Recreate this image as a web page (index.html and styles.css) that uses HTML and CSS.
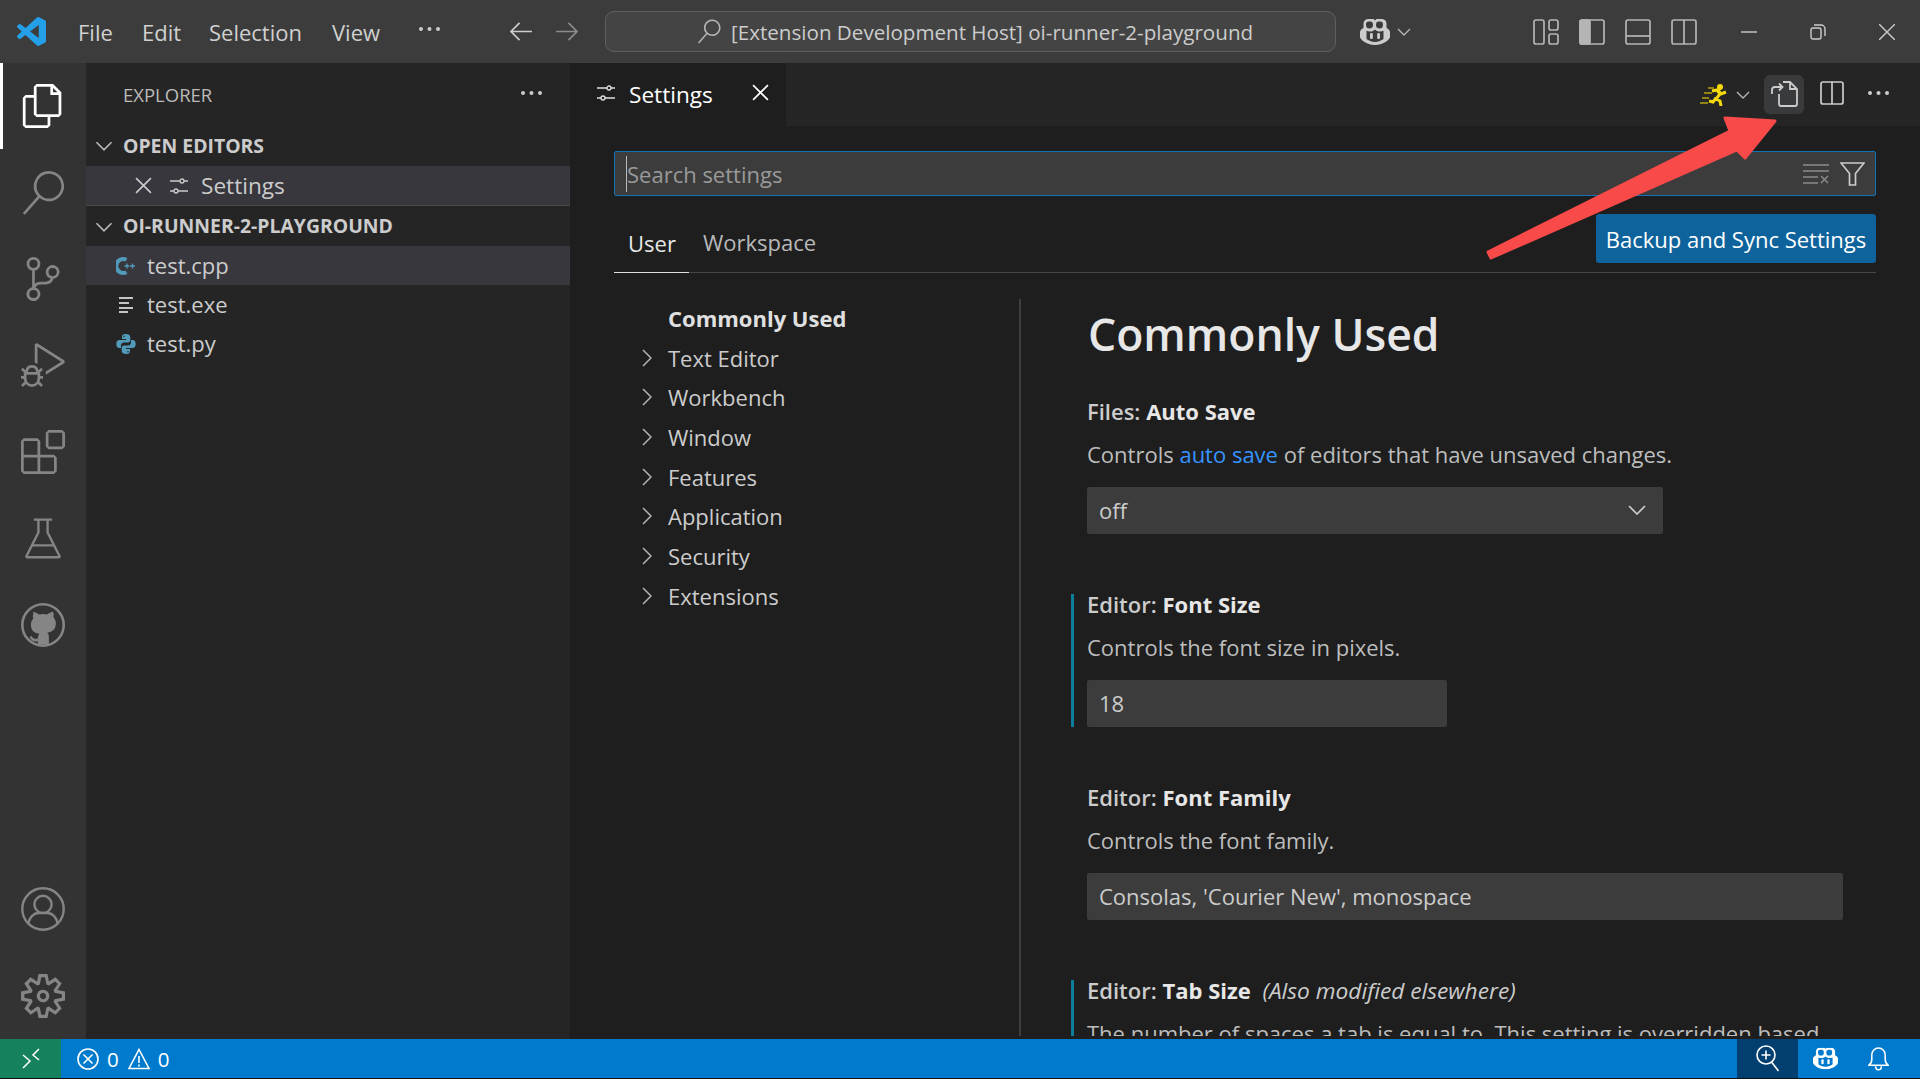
FILE: index.html
```html
<!DOCTYPE html>
<html>
<head>
  <meta charset="UTF-8">
  <title>Settings - oi-runner-2-playground</title>
  <link rel="stylesheet" href="styles.css">
</head>
<body>
<div class="app">
  <header class="titlebar">
    <svg class="logo" viewBox="0 0 24 24"><path fill="#23a0e8" d="M23.15 2.587L18.21.21a1.494 1.494 0 0 0-1.705.29l-9.46 8.63-4.12-3.128a.999.999 0 0 0-1.276.057L.327 7.261A1 1 0 0 0 .326 8.74L3.899 12 .326 15.26a1 1 0 0 0 .001 1.479L1.65 17.94a.999.999 0 0 0 1.276.057l4.12-3.128 9.46 8.63a1.492 1.492 0 0 0 1.704.29l4.942-2.377A1.5 1.5 0 0 0 24 20.06V3.939a1.5 1.5 0 0 0-.85-1.352zm-5.146 14.861L10.826 12l7.178-5.448v10.896z"/></svg>
    <nav class="menu">
      <span>File</span><span>Edit</span><span>Selection</span><span>View</span>
      <svg class="dots" viewBox="0 0 23 6"><circle cx="3" cy="3" r="2"/><circle cx="11.500" cy="3" r="2"/><circle cx="20" cy="3" r="2"/></svg>
    </nav>
    <div class="nav-arrows">
      <svg class="arrow" viewBox="0 0 24 20"><path d="M11 1L2 10l9 9M2 10h22"/></svg>
      <svg class="arrow dim" viewBox="0 0 24 20"><path d="M13 1l9 9-9 9M22 10H0"/></svg>
    </div>
    <div class="command-center">
      <svg class="cc-search" viewBox="0 0 24 24"><path d="M15.25 0a8.25 8.25 0 0 0-6.18 13.72L1 22.88l1.12 1 8.05-9.12A8.251 8.251 0 1 0 15.25.01V0zm0 15a6.75 6.75 0 1 1 0-13.5 6.75 6.75 0 0 1 0 13.5z"/></svg>
      <span>[Extension Development Host] oi-runner-2-playground</span>
    </div>
    <div class="copilot-menu">
      <svg class="copilot" viewBox="0 0 30 26"><use href="#copilot-shape"/></svg>
      <svg class="chevron" viewBox="0 0 14 8"><path d="M1 1l6 6 6-6"/></svg>
    </div>
    <div class="layout-icons">
      <svg class="layout" viewBox="0 0 26 26"><rect x="1" y="1" width="10" height="24" rx="2"/><rect x="16" y="1" width="9" height="10" rx="2"/><rect x="16" y="15" width="9" height="10" rx="2"/></svg>
      <svg class="layout" viewBox="0 0 26 26"><rect x="1" y="1" width="24" height="24" rx="2"/><rect class="solid" x="1" y="1" width="10" height="24" rx="2"/></svg>
      <svg class="layout" viewBox="0 0 26 26"><rect x="1" y="1" width="24" height="24" rx="2"/><path d="M1 17h24"/></svg>
      <svg class="layout" viewBox="0 0 26 26"><rect x="1" y="1" width="24" height="24" rx="2"/><path d="M13 1v24"/></svg>
    </div>
    <div class="window-controls">
      <svg class="win" viewBox="0 0 16 16"><path d="M0 8h16"/></svg>
      <svg class="win" viewBox="0 0 16 16"><rect x="1" y="4" width="10" height="11" rx="2"/><path d="M4 1h7a4 4 0 0 1 4 4v7"/></svg>
      <svg class="win" viewBox="0 0 16 16"><path d="M0 0l16 16M16 0L0 16"/></svg>
    </div>
  </header>

  <div class="workbench">
    <aside class="activitybar">
      <div class="activity active"><svg viewBox="0 0 24 24"><path d="M17.5 0h-9L7 1.500V6H2.500L1 7.500v15.070L2.500 24h12.070L16 22.570V18h4.700l1.300-1.430V4.500L17.500 0zm0 2.120l2.380 2.380H17.500V2.120zm-3 20.380h-12v-15H7v9.070L8.500 18h6v4.500zm6-6h-12v-15H16V6h4.500v10.500z"/></svg></div>
      <div class="activity"><svg viewBox="0 0 24 24"><path d="M15.250 0a8.250 8.250 0 0 0-6.180 13.720L1 22.880l1.120 1 8.050-9.120A8.251 8.251 0 1 0 15.250.01V0zm0 15a6.750 6.750 0 1 1 0-13.500 6.750 6.750 0 0 1 0 13.500z"/></svg></div>
      <div class="activity"><svg viewBox="0 0 24 24"><path d="M21.007 8.222A3.738 3.738 0 0 0 15.045 5.200a3.737 3.737 0 0 0 1.156 6.583 2.988 2.988 0 0 1-2.668 1.670h-2.990a4.456 4.456 0 0 0-2.989 1.165V7.400a3.737 3.737 0 1 0-1.494 0v9.117a3.776 3.776 0 1 0 1.816.099 2.990 2.990 0 0 1 2.668-1.667h2.990a4.484 4.484 0 0 0 4.223-3.039 3.736 3.736 0 0 0 3.250-3.687zM4.565 3.738a2.242 2.242 0 1 1 4.484 0 2.242 2.242 0 0 1-4.484 0zm4.484 16.441a2.242 2.242 0 1 1-4.484 0 2.242 2.242 0 0 1 4.484 0zm8.221-9.715a2.242 2.242 0 1 1 0-4.485 2.242 2.242 0 0 1 0 4.485z"/></svg></div>
      <div class="activity"><svg viewBox="0 0 24 24"><path d="M10.940 13.500l-1.320 1.320a3.730 3.730 0 0 0-7.240 0L1.060 13.500 0 14.560l1.720 1.720-.22.220V18H0v1.500h1.500v.08c.077.489.214.966.41 1.420L0 22.940 1.060 24l1.650-1.650A4.308 4.308 0 0 0 6 24a4.310 4.310 0 0 0 3.290-1.650L10.940 24 12 22.940 10.090 21c.198-.464.336-.951.41-1.450v-.1H12V18h-1.500v-1.500l-.22-.22L12 14.560l-1.060-1.060zM6 13.500a2.250 2.250 0 0 1 2.250 2.250h-4.500A2.250 2.250 0 0 1 6 13.500zm3 6a3.330 3.330 0 0 1-3 3 3.330 3.330 0 0 1-3-3v-2.250h6v2.250zm14.760-9.900v1.260L13.500 17.370v-1.760l8.500-5.370L9 2v9.460a5.070 5.070 0 0 0-1.500-.72V.63L8.640 0l15.120 9.600z"/></svg></div>
      <div class="activity"><svg viewBox="0 0 24 24"><path d="M13.500 1.500L15 0h7.500L24 1.500V9l-1.500 1.500H15L13.500 9V1.500zm1.500 0V9h7.500V1.500H15zM0 15V6l1.500-1.500H9L10.500 6v7.500H18l1.500 1.500v7.500L18 24H1.500L0 22.500V15zm9-1.500V6H1.500v7.500H9zM9 15H1.500v7.500H9V15zm1.500 7.500H18V15h-7.500v7.500z"/></svg></div>
      <div class="activity"><svg class="line" viewBox="0 0 24 24"><path d="M7 2h10M9.500 2v7L3 21.800c-.2.4 0 .7.500.7h17c.5 0 .7-.3.500-.7L14.500 9V2M6 16h12" stroke-width="1.300"/></svg></div>
      <div class="activity"><svg viewBox="0 0 24 24"><path fill-rule="evenodd" d="M12 0a12 12 0 1 0 0 24 12 12 0 0 0 0-24zm0 1.400a10.600 10.600 0 1 1 0 21.200 10.600 10.600 0 0 1 0-21.200z"/><path d="M6.500 4.800c1 .1 2.300.8 3.300 1.500a9 9 0 0 1 4.400 0c1-.7 2.300-1.400 3.300-1.500.4 1 .4 2.200.2 3 .9 1 1.300 2.100 1.300 3.400 0 3.100-1.900 4.600-4.700 5 .7.500.9 1.200.9 2.100v4.400h-6v-1.800c-2 .4-3.600-.3-4.600-2.400l1.100-.5c.8 1.500 2.100 1.800 3.500 1.300 0-.8.300-2 .9-2.500-2.800-.4-4.700-1.900-4.700-5 0-1.300.4-2.400 1.300-3.400-.3-.8-.3-2 .1-3z"/></svg></div>
      <div class="activity-spacer"></div>
      <div class="activity"><svg class="line" viewBox="0 0 24 24"><circle cx="12" cy="12" r="11.300"/><circle cx="12" cy="9.500" r="4.700"/><path d="M4 20c.6-3.500 3-5.800 5.500-5.800h5c2.500 0 4.900 2.300 5.500 5.800"/></svg></div>
      <div class="activity"><svg viewBox="0 0 24 24"><path d="M19.850 8.750l4.150.83v4.840l-4.150.83 2.350 3.520-3.430 3.430-3.520-2.350-.83 4.150H9.580l-.83-4.150-3.520 2.350-3.430-3.430 2.350-3.520L0 14.420V9.580l4.150-.83L1.800 5.230 5.230 1.800l3.520 2.350L9.580 0h4.840l.83 4.150 3.520-2.350 3.430 3.430-2.350 3.520zm-1.570 5.070l4-.81v-2l-4-.81-.54-1.300 2.290-3.430-1.430-1.430-3.430 2.290-1.300-.54-.81-4h-2l-.81 4-1.300.54-3.430-2.290-1.430 1.430L6.380 8.900l-.54 1.300-4 .81v2l4 .81.54 1.300-2.290 3.430 1.430 1.430 3.430-2.290 1.300.54.81 4h2l.81-4 1.300-.54 3.430 2.290 1.430-1.430-2.290-3.430.54-1.300zm-8.186-4.672A3.430 3.430 0 0 1 12 8.570 3.440 3.440 0 0 1 15.430 12a3.430 3.430 0 1 1-5.336-2.852zm.956 4.274c.281.188.612.288.95.288A1.700 1.700 0 0 0 13.710 12a1.710 1.710 0 1 0-2.660 1.422z"/></svg></div>
    </aside>

    <aside class="sidebar">
      <div class="sidebar-title">
        <span>EXPLORER</span>
        <svg class="dots" viewBox="0 0 23 6"><circle cx="3" cy="3" r="2"/><circle cx="11.500" cy="3" r="2"/><circle cx="20" cy="3" r="2"/></svg>
      </div>
      <div class="section-head">
        <svg class="chevron" viewBox="0 0 14 8"><path d="M1 1l6 6 6-6"/></svg>
        <span>OPEN EDITORS</span>
      </div>
      <div class="row open-editor">
        <svg class="x-icon" viewBox="0 0 16 16"><path d="M1 1l14 14M15 1L1 15"/></svg>
        <svg class="sliders" viewBox="0 0 18 18"><use href="#sliders-shape"/></svg>
        <span>Settings</span>
      </div>
      <div class="section-head project">
        <svg class="chevron" viewBox="0 0 14 8"><path d="M1 1l6 6 6-6"/></svg>
        <span>OI-RUNNER-2-PLAYGROUND</span>
      </div>
      <div class="row file selected">
        <svg class="file-icon" viewBox="0 0 20 20"><path d="M10.500 3.800a7 7 0 1 0 0 12.400" stroke="#519aba" stroke-width="4"/><path d="M11 7.500v5M8.500 10h5M16.500 7.500v5M14 10h5" stroke="#519aba" stroke-width="1.300"/></svg>
        <span>test.cpp</span>
      </div>
      <div class="row file">
        <svg class="file-icon" viewBox="0 0 20 20"><path d="M3 3h14M3 8h10M3 13h14M3 17h9" stroke="#c5c5c5" stroke-width="2"/></svg>
        <span>test.exe</span>
      </div>
      <div class="row file">
        <svg class="file-icon" viewBox="0 0 20 20"><path fill="#519aba" d="M9.800 0C6.500 0 6 1.400 6 3v2h4v1H3.500C1.500 6 .3 7.500.3 10s1.200 4 3 4H5v-2.500C5 9.500 6.500 8.500 8 8.500h4c1.300 0 2.300-1 2.300-2.300V3c0-1.800-1.800-3-4.500-3zM8 1.500a.8.800 0 1 1 0 1.600.8.800 0 0 1 0-1.600z"/><path fill="#519aba" d="M10.200 20c3.300 0 3.800-1.400 3.800-3v-2h-4v-1h6.500c2 0 3.200-1.500 3.200-4s-1.200-4-3-4H15v2.500c0 2-1.500 3-3 3H8c-1.300 0-2.300 1-2.300 2.300V17c0 1.800 1.800 3 4.500 3zm1.800-1.500a.8.800 0 1 1 0-1.600.8.800 0 0 1 0 1.600z"/></svg>
        <span>test.py</span>
      </div>
    </aside>

    <main class="editor">
      <div class="tabbar">
        <div class="tab">
          <svg class="sliders" viewBox="0 0 18 18"><use href="#sliders-shape"/></svg>
          <span>Settings</span>
          <svg class="x-icon" viewBox="0 0 16 16"><path d="M1 1l14 14M15 1L1 15"/></svg>
        </div>
        <div class="tab-actions">
          <svg class="runner" viewBox="0 0 28 22">
            <path class="trail" d="M8 4h6M4 9h8M2 14h7M0 19h8"/>
            <circle cx="20" cy="3" r="3" fill="#f5d90a"/>
            <path class="legs" d="M12 7l5-1 3 4-4 5 4 2 1 5M18 6l3 4 5-2M16 14l-3 4-4-1"/>
          </svg>
          <svg class="chevron" viewBox="0 0 14 8"><path d="M1 1l6 6 6-6"/></svg>
          <div class="action-btn hover">
            <svg class="action-icon" viewBox="0 0 28 26"><path d="M9 13v10a2 2 0 0 0 2 2h14a2 2 0 0 0 2-2V8l-7-7h-7M20 1v7h7M2 13V9a3 3 0 0 1 3-3h7M9 2.500L12.500 6 9 9.500"/></svg>
          </div>
          <svg class="split" viewBox="0 0 24 24"><rect x="1" y="1" width="22" height="22" rx="2"/><path d="M12 1v22"/></svg>
          <svg class="dots" viewBox="0 0 23 6"><circle cx="3" cy="3" r="2"/><circle cx="11.500" cy="3" r="2"/><circle cx="20" cy="3" r="2"/></svg>
        </div>
      </div>

      <div class="settings">
        <div class="search-box">
          <span class="caret"></span>
          <span class="placeholder">Search settings</span>
          <svg class="clear-icon" viewBox="0 0 26 20"><path d="M0 1h26M0 7h26M0 13h15M0 19h15M18 12l7 7M25 12l-7 7"/></svg>
          <svg class="filter-icon" viewBox="0 0 25 24"><path d="M1 1h23l-8.500 10.500V23h-6V11.500z"/></svg>
        </div>
        <div class="scope-row">
          <span class="scope active">User</span>
          <span class="scope">Workspace</span>
          <button class="sync-btn">Backup and Sync Settings</button>
        </div>

        <div class="settings-body">
          <ul class="toc">
            <li class="toc-top">Commonly Used</li>
            <li><svg class="toc-arrow" viewBox="0 0 10 18"><path d="M1 1l8 8-8 8"/></svg>Text Editor</li>
            <li><svg class="toc-arrow" viewBox="0 0 10 18"><path d="M1 1l8 8-8 8"/></svg>Workbench</li>
            <li><svg class="toc-arrow" viewBox="0 0 10 18"><path d="M1 1l8 8-8 8"/></svg>Window</li>
            <li><svg class="toc-arrow" viewBox="0 0 10 18"><path d="M1 1l8 8-8 8"/></svg>Features</li>
            <li><svg class="toc-arrow" viewBox="0 0 10 18"><path d="M1 1l8 8-8 8"/></svg>Application</li>
            <li><svg class="toc-arrow" viewBox="0 0 10 18"><path d="M1 1l8 8-8 8"/></svg>Security</li>
            <li><svg class="toc-arrow" viewBox="0 0 10 18"><path d="M1 1l8 8-8 8"/></svg>Extensions</li>
          </ul>
          <div class="contents">
            <h1>Commonly Used</h1>
            <section class="setting">
              <div class="setting-title">Files: <b>Auto Save</b></div>
              <div class="setting-desc">Controls <a href="#">auto save</a> of editors that have unsaved changes.</div>
              <div class="field select">off
                <svg class="select-arrow" viewBox="0 0 18 10"><path d="M1 1l8 8 8-8"/></svg>
              </div>
            </section>
            <section class="setting modified">
              <div class="setting-title">Editor: <b>Font Size</b></div>
              <div class="setting-desc">Controls the font size in pixels.</div>
              <div class="field short">18</div>
            </section>
            <section class="setting">
              <div class="setting-title">Editor: <b>Font Family</b></div>
              <div class="setting-desc">Controls the font family.</div>
              <div class="field wide">Consolas, 'Courier New', monospace</div>
            </section>
            <section class="setting modified">
              <div class="setting-title">Editor: <b>Tab Size</b> <i>(Also modified elsewhere)</i></div>
              <div class="setting-desc">The number of spaces a tab is equal to. This setting is overridden based</div>
            </section>
          </div>
        </div>
      </div>
    </main>
  </div>

  <footer class="statusbar">
    <div class="remote"><svg viewBox="0 0 18 22"><path d="M1 7l7 6-7 7M17 1l-6 6 6 5"/></svg></div>
    <div class="problems">
      <svg class="status-icon" viewBox="0 0 22 22"><circle cx="11" cy="11" r="10"/><path d="M6.500 6.500l9 9M15.500 6.500l-9 9"/></svg>
      <span>0</span>
      <svg class="status-icon warn" viewBox="0 0 22 22"><path d="M11 1.500L21 20.500H1zM11 8v7M11 16.500v2"/></svg>
      <span>0</span>
    </div>
    <div class="status-right">
      <div class="zoom-item"><svg class="status-icon" viewBox="0 0 23 27"><circle cx="10" cy="10" r="9"/><path d="M10 5.500v9M5.500 10h9M15.500 17l7 9"/></svg></div>
      <svg class="copilot small" viewBox="0 0 30 26"><use href="#copilot-shape"/></svg>
      <svg class="status-icon bell" viewBox="0 0 22 26"><path d="M1 20c2-1.500 3-3 3-6V9a7 7 0 0 1 14 0v5c0 3 1 4.500 3 6zM8 21c0 5 6 5 6 0"/></svg>
    </div>
  </footer>

  <svg class="callout" viewBox="0 0 1920 1079"><path d="M1725 118L1775 121L1745 158L1737 150L1491 258L1488 252L1730 131z"/></svg>
</div>

<svg class="defs" width="0" height="0">
  <symbol id="sliders-shape" viewBox="0 0 18 18">
    <path d="M0 4h10M14 4h4M0 14h4M8 14h10" fill="none" stroke="currentColor" stroke-width="1.300"/>
    <circle cx="12" cy="4" r="2" fill="none" stroke="currentColor" stroke-width="1.300"/>
    <circle cx="6" cy="14" r="2" fill="none" stroke="currentColor" stroke-width="1.300"/>
  </symbol>
  <symbol id="copilot-shape" viewBox="0 0 30 26">
    <path fill="currentColor" fill-rule="evenodd" d="M8 0h4.500c1.300 0 2 .6 2.500 1.500C15.500.6 16.200 0 17.500 0H22c3 0 4.500 2.200 4.500 5v4c2 1 3.500 2.500 3.500 4v5c0 2-6 8-15 8S0 20 0 18v-5c0-1.500 1.500-3 3.500-4V5C3.500 2.200 5 0 8 0zm.500 2.500c-1.500 0-2.500.8-2.500 3 0 2.800.8 4 3.500 4 2.500 0 3.500-1.300 3.500-3.500 0-2.500-1-3.500-2.500-3.500zm10 0c-1.500 0-2.500 1-2.500 3.500 0 2.200 1 3.500 3.500 3.500 2.700 0 3.500-1.200 3.500-4 0-2.200-1-3-2.500-3zM15 10.500c-1.500 1.500-3 2-5 2-1.300 0-2.500-.3-3.500-.8V20c2 1.500 5 3 8.500 3s6.500-1.500 8.500-3v-8.300c-1 .5-2.200.8-3.500.8-2 0-3.500-.5-5-2z"/>
    <rect x="10" y="14" width="2.800" height="6" rx="1.200" fill="currentColor"/>
    <rect x="17.200" y="14" width="2.800" height="6" rx="1.200" fill="currentColor"/>
  </symbol>
</svg>
</body>
</html>
```
FILE: styles.css
```css
* {
  box-sizing: border-box;
}
html, body {
  margin: 0;
  height: 100%;
  overflow: hidden;
  background: #111;
}
body {
  font-family: "Open Sans", "Noto Sans", sans-serif;
  font-size: 22px;
  color: #ccc;
}
svg {
  display: block;
  flex: none;
}
.defs {
  position: absolute;
}
.app {
  position: relative;
  display: flex;
  flex-direction: column;
  height: 1078px;
}

/* title bar */
.titlebar {
  display: flex;
  align-items: center;
  flex: none;
  height: 63px;
  background: #3c3c3c;
}
.logo {
  width: 29px;
  height: 29px;
  margin-left: 17px;
}
.menu {
  display: grid;
  grid-template-columns: 64px 67px 123px 86px 23px;
  align-items: center;
  margin-left: 32px;
  color: #d0d0d0;
}
.dots {
  width: 23px;
  height: 6px;
  fill: #ccc;
}
.menu .dots {
  margin-top: -6px;
}
.nav-arrows {
  display: flex;
  gap: 24px;
  margin-left: 68px;
}
.arrow {
  width: 23px;
  height: 19px;
  fill: none;
  stroke: #ccc;
  stroke-width: 1.800;
}
.arrow.dim {
  stroke: #8c8c8c;
}
.command-center {
  display: flex;
  align-items: center;
  gap: 10px;
  width: 731px;
  height: 41px;
  margin-left: 26px;
  padding-left: 91px;
  background: #444;
  border: 1px solid #5f5f5f;
  border-radius: 9px;
  font-size: 20.600px;
}
.cc-search {
  width: 24px;
  height: 25px;
  fill: #b5b5b5;
}
.copilot-menu {
  display: flex;
  align-items: center;
  gap: 7px;
  margin-left: 24px;
}
.copilot {
  width: 30px;
  height: 26px;
  color: #ccc;
}
.chevron {
  width: 14px;
  height: 8px;
  fill: none;
  stroke: #b5b5b5;
  stroke-width: 1.400;
}
.layout-icons {
  display: flex;
  gap: 20px;
  margin-left: 122px;
}
.layout {
  width: 26px;
  height: 26px;
  fill: none;
  stroke: #b5b5b5;
  stroke-width: 1.700;
}
.layout .solid {
  fill: #b5b5b5;
}
.window-controls {
  display: flex;
  gap: 53px;
  margin-left: 44px;
}
.win {
  width: 16px;
  height: 16px;
  fill: none;
  stroke: #ccc;
  stroke-width: 1.400;
}

/* main area */
.workbench {
  display: flex;
  flex: 1;
  min-height: 0;
}
.activitybar {
  display: flex;
  flex-direction: column;
  flex: none;
  width: 86px;
  background: #333;
}
.activity {
  display: flex;
  align-items: center;
  justify-content: center;
  height: 86.400px;
}
.activity svg {
  width: 44px;
  height: 44px;
  fill: #858585;
}
.activity svg.line {
  fill: none;
  stroke: #858585;
  stroke-width: 1.300;
}
.activity.active {
  border-left: 3px solid #fff;
  padding-right: 3px;
}
.activity.active svg {
  fill: #fff;
}
.activity-spacer {
  flex: 1;
}

/* explorer */
.sidebar {
  flex: none;
  width: 484px;
  background: #252526;
}
.sidebar-title {
  display: flex;
  align-items: center;
  justify-content: space-between;
  height: 63px;
  padding: 0 27px 3px 37px;
  font-size: 18.500px;
  color: #bbb;
}
.sidebar-title span {
  margin-top: 2px;
}
.section-head {
  display: flex;
  align-items: center;
  height: 40px;
  padding-left: 9px;
  gap: 10px;
  font-size: 19.400px;
  font-weight: 700;
  color: #ccc;
}
.section-head .chevron {
  width: 18px;
  height: 10px;
}
.section-head span {
  margin-top: -2px;
}
.section-head.project {
  height: 39px;
  margin-top: 1px;
}
.row {
  display: flex;
  align-items: center;
  height: 39.400px;
}
.open-editor {
  height: 40px;
  padding-left: 49px;
  background: #37373d;
  border-bottom: 1px solid #4a4a4d;
}
.x-icon {
  width: 17px;
  height: 17px;
  fill: none;
  stroke: #ccc;
  stroke-width: 1.500;
}
.sliders {
  width: 18px;
  height: 18px;
  margin-left: 18px;
  color: #ccc;
}
.open-editor span {
  margin-left: 13px;
  font-size: 22.600px;
}
.file {
  padding-left: 30px;
  gap: 11px;
}
.file span {
  margin-top: -2px;
}
.file.selected {
  background: #37373d;
}
.file-icon {
  width: 20px;
  height: 20px;
  fill: none;
}

/* editor */
.editor {
  display: flex;
  flex-direction: column;
  flex: 1;
  min-width: 0;
  background: #1e1e1e;
}
.tabbar {
  display: flex;
  justify-content: space-between;
  flex: none;
  height: 63px;
  background: #252526;
}
.tab {
  display: flex;
  align-items: center;
  width: 216px;
  background: #1e1e1e;
  color: #fff;
}
.tab .sliders {
  margin-left: 27px;
  margin-top: -3px;
  color: #e0e0e0;
}
.tab span {
  margin-left: 14px;
  font-size: 22.600px;
}
.tab .x-icon {
  margin-left: auto;
  margin-right: 17px;
  margin-top: -5px;
  stroke: #fff;
}
.tab-actions {
  display: flex;
  align-items: center;
  align-self: flex-start;
  height: 63px;
  padding-right: 30px;
}
.runner {
  width: 28px;
  height: 22px;
  fill: none;
}
.runner .trail {
  stroke: #b9a40e;
  stroke-width: 1.500;
}
.runner .legs {
  stroke: #f5d90a;
  stroke-width: 3;
}
.tab-actions .chevron {
  margin-left: 8px;
}
.action-btn {
  display: flex;
  align-items: center;
  justify-content: center;
  width: 40px;
  height: 39px;
  margin-left: 14px;
  border-radius: 6px;
}
.action-btn.hover {
  background: #393a3b;
}
.action-icon {
  width: 28px;
  height: 26px;
  margin-top: -2px;
  fill: none;
  stroke: #ccc;
  stroke-width: 1.800;
}
.split {
  width: 24px;
  height: 24px;
  margin: -3px 0 0 16px;
  fill: none;
  stroke: #ccc;
  stroke-width: 1.700;
}
.tab-actions .dots {
  margin: -3px 0 0 23px;
}

/* settings */
.settings {
  display: flex;
  flex-direction: column;
  flex: 1;
  min-height: 0;
  padding: 25px 44px 3px;
}
.search-box {
  display: flex;
  align-items: center;
  flex: none;
  height: 45px;
  padding: 0 10px 0 11px;
  background: #3c3c3c;
  border: 1px solid #1272b8;
  border-radius: 2px;
}
.caret {
  width: 1px;
  height: 36px;
  background: #bbb;
}
.placeholder {
  flex: 1;
  color: #9a9a9a;
}
.clear-icon {
  width: 26px;
  height: 20px;
  fill: none;
  stroke: #8a8a8a;
  stroke-width: 1.500;
}
.filter-icon {
  width: 25px;
  height: 24px;
  margin-left: 11px;
  fill: none;
  stroke: #ccc;
  stroke-width: 1.700;
}
.scope-row {
  display: flex;
  align-items: flex-end;
  flex: none;
  height: 77px;
  border-bottom: 1px solid #454545;
}
.scope {
  height: 77px;
  padding: 32px 13px 0 14px;
  color: #b8b8b8;
}
.scope.active {
  color: #e7e7e7;
  border-bottom: 1px solid #e0e0e0;
  margin-bottom: -1px;
}
.sync-btn {
  width: 280px;
  height: 49px;
  margin: 0 0 9px auto;
  padding: 0;
  border: 0;
  border-radius: 3px;
  background: #0e639c;
  color: #fff;
  font: inherit;
}
.settings-body {
  display: flex;
  flex: 1;
  min-height: 0;
  padding-top: 26px;
  overflow: hidden;
}
.toc {
  flex: none;
  width: 407px;
  margin: 0;
  padding: 0;
  list-style: none;
  border-right: 2px solid #3f3f3f;
}
.toc li {
  display: flex;
  align-items: center;
  height: 39.700px;
  padding: 0 0 2px 28px;
}
.toc-top {
  font-weight: 700;
  color: #e0e0e0;
}
.toc .toc-top {
  padding-left: 54px;
}
.toc-arrow {
  width: 10px;
  height: 18px;
  margin-right: 16px;
  fill: none;
  stroke: #b5b5b5;
  stroke-width: 1.500;
}
.contents {
  flex: 1;
  min-width: 0;
  padding-left: 50px;
}
h1 {
  height: 60px;
  margin: 5px 0 37px 17px;
  font-size: 44.500px;
  line-height: 60px;
  font-weight: 600;
  color: #e7e7e7;
  white-space: nowrap;
}
.setting {
  margin-bottom: 60px;
  padding-left: 13px;
  border-left: 3px solid transparent;
}
.setting.modified {
  border-left-color: #0c7d9d;
}
.setting-title {
  height: 24px;
  line-height: 20px;
  color: #ccc;
  font-weight: 600;
}
.setting-title b {
  font-weight: 700;
  color: #e7e7e7;
}
.setting-title i {
  margin-left: 6px;
  font-size: 22.700px;
  font-weight: 400;
  color: #ccc;
}
.setting-desc {
  height: 24px;
  margin-top: 18px;
  line-height: 22px;
  white-space: nowrap;
  color: #bdbdbd;
}
.setting-desc a {
  color: #3794ff;
  text-decoration: none;
}
.field {
  display: flex;
  align-items: center;
  justify-content: space-between;
  height: 47px;
  margin-top: 20px;
  padding: 0 17px 2px 12px;
  background: #3c3c3c;
  border-radius: 2px;
}
.select {
  width: 576px;
}
.short {
  width: 360px;
}
.wide {
  width: 756px;
}
.select-arrow {
  width: 18px;
  height: 10px;
  fill: none;
  stroke: #ccc;
  stroke-width: 1.700;
}

/* status bar */
.statusbar {
  display: flex;
  align-items: center;
  flex: none;
  height: 39px;
  background: #007acc;
  color: #fff;
}
.remote {
  display: flex;
  align-items: center;
  justify-content: center;
  width: 61px;
  height: 100%;
  background: #16825d;
}
.remote svg {
  width: 18px;
  height: 22px;
  fill: none;
  stroke: #fff;
  stroke-width: 1.500;
}
.problems {
  display: flex;
  align-items: center;
  gap: 8px;
  margin-left: 16px;
  font-size: 20.500px;
}
.status-icon {
  width: 22px;
  height: 22px;
  fill: none;
  stroke: #fff;
  stroke-width: 1.600;
}
.warn {
  margin-left: 1px;
}
.status-right {
  display: flex;
  align-items: center;
  height: 100%;
  margin-left: auto;
}
.zoom-item {
  display: flex;
  align-items: center;
  justify-content: center;
  width: 61px;
  height: 100%;
  background: #003f6f;
}
.zoom-item .status-icon {
  width: 23px;
  height: 27px;
}
.copilot.small {
  width: 25px;
  height: 25px;
  margin-left: 15px;
  color: #fff;
}
.bell {
  width: 21px;
  height: 25px;
  margin: 0 31px 0 30px;
}

/* red annotation arrow over the page */
.callout {
  position: absolute;
  top: 0;
  left: 0;
  width: 1920px;
  height: 1079px;
  pointer-events: none;
}
.callout path {
  fill: #f94a4a;
  stroke: #f94a4a;
  stroke-width: 3;
  stroke-linejoin: round;
}
```
